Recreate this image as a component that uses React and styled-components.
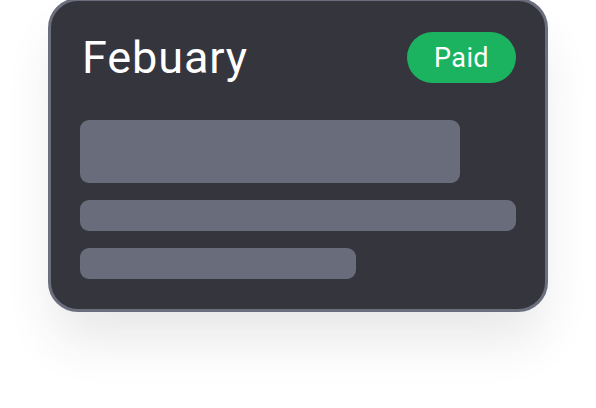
import React from "react";
import styled, { createGlobalStyle } from "styled-components";

const GlobalStyle = createGlobalStyle`
  html, body {
    margin: 0;
    padding: 0;
    background: #ffffff;
  }
  body {
    font-family: Roboto, "Liberation Sans", sans-serif;
  }
`;

function App() {
  return (
    <Page>
      <GlobalStyle />
      <Card>
        <Header>
          <Month>Febuary</Month>
          <Badge>Paid</Badge>
        </Header>
        <Lines>
          <Block />
          <Bar $width="436px" />
          <Bar $width="276px" />
        </Lines>
      </Card>
    </Page>
  );
}

export default App;

const Page = styled.div`
  width: 596px;
  height: 408px;
  display: flex;
  justify-content: center;
  align-items: flex-start;
  overflow: hidden;
`;

const Card = styled.div`
  box-sizing: border-box;
  width: 500px;
  height: 314px;
  margin-top: -2px;
  padding: 31px 29px 29px 29px;
  background: #35353e;
  border: 3px solid #6b6e7c;
  border-radius: 30px;
  box-shadow: 0 34px 50px -6px rgba(40, 50, 40, 0.11);
  display: flex;
  flex-direction: column;
`;

const Header = styled.div`
  display: flex;
  justify-content: space-between;
  align-items: center;
  height: 51px;
`;

const Month = styled.h1`
  margin: 0;
  padding-left: 2px;
  font-size: 45px;
  font-weight: 400;
  color: #ffffff;
  letter-spacing: 0.9px;
  line-height: 1;
`;

const Badge = styled.span`
  display: flex;
  align-items: center;
  justify-content: center;
  width: 109px;
  height: 51px;
  border-radius: 26px;
  background: #1bb35f;
  color: #ffffff;
  font-size: 27px;
  font-weight: 400;
  letter-spacing: 0.4px;
`;

const Lines = styled.div`
  display: flex;
  flex-direction: column;
  gap: 17px;
  margin-top: 37px;
`;

const Block = styled.div`
  width: 380px;
  height: 63px;
  border-radius: 9px;
  background: #696d7b;
`;

const Bar = styled.div`
  width: ${(p) => p.$width};
  height: 31px;
  border-radius: 9px;
  background: #696d7b;
`;
